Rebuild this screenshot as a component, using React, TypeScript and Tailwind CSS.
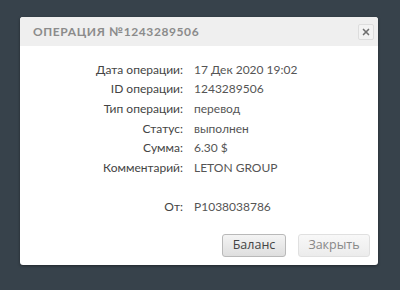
import { X } from "lucide-react";

const rows: [string, string][] = [
  ["Дата операции:", "17 Дек 2020 19:02"],
  ["ID операции:", "1243289506"],
  ["Тип операции:", "перевод"],
  ["Статус:", "выполнен"],
  ["Сумма:", "6.30 $"],
  ["Комментарий:", "LETON GROUP"],
];

export default function App() {
  return (
    <div className="w-[400px] h-[290px] bg-[#37424b] pt-[17px] pl-[20px] font-['Lato',sans-serif]">
      <div className="w-[358px] h-[248px] bg-white rounded-[3px] overflow-hidden shadow-[0_1px_3px_rgba(0,0,0,0.4)] flex flex-col">
        {/* Header */}
        <div className="h-[29px] bg-[#efefef] flex items-center justify-between pl-[13px] pr-[4px]">
          <span className="text-[12px] font-bold tracking-[0.05em] text-[#8b8b8b] uppercase">
            Операция №1243289506
          </span>
          <button className="w-[16px] h-[16px] mt-[1px] border border-[#ddd] rounded-[2px] bg-[#f3f3f3] flex items-center justify-center">
            <X className="w-[10px] h-[10px] text-[#6f6f6f]" strokeWidth={4} />
          </button>
        </div>

        {/* Details */}
        <div className="pt-[14px] text-[12px] text-[#444]">
          {rows.map(([label, value]) => (
            <div key={label} className="flex h-[19.6px] items-center">
              <div className="w-[163px] text-right">{label}</div>
              <div className="pl-[11px] text-[#555]">{value}</div>
            </div>
          ))}
          <div className="flex h-[19.6px] items-center mt-[20px]">
            <div className="w-[163px] text-right">От:</div>
            <div className="pl-[11px] text-[#555]">P1038038786</div>
          </div>
        </div>

        {/* Buttons */}
        <div className="flex justify-end gap-[12px] pr-[8px] mt-[17px] font-['Open_Sans',sans-serif]">
          <button className="w-[64px] h-[23px] rounded-[3px] border border-[#b9b9b9] bg-gradient-to-b from-[#f4f4f4] to-[#dedede] text-[12.5px] text-[#444]">
            Баланс
          </button>
          <button className="w-[72px] h-[23px] rounded-[3px] border border-[#e0e0e0] bg-gradient-to-b from-[#f8f8f8] to-[#ececec] text-[12.5px] text-[#888]">
            Закрыть
          </button>
        </div>
      </div>
    </div>
  );
}
